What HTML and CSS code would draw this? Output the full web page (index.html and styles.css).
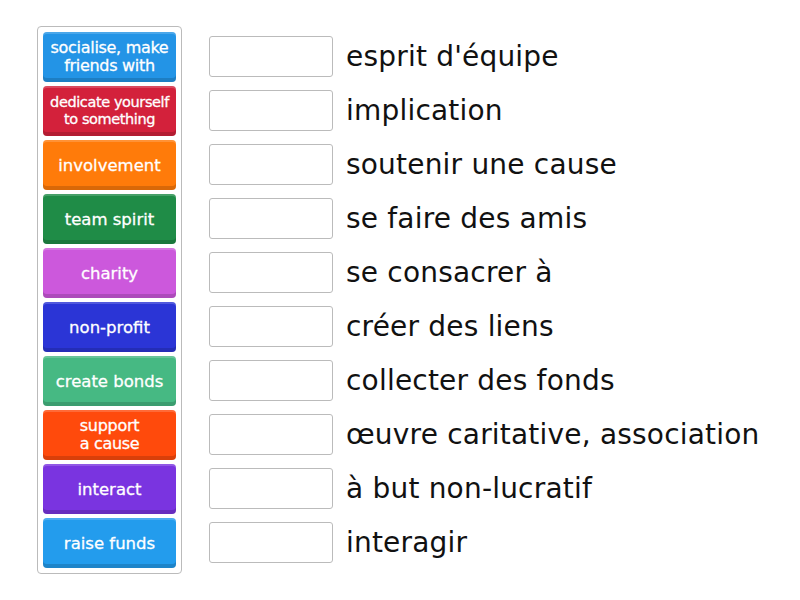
FILE: index.html
```html
<!DOCTYPE html>
<html lang="fr">

<head>
    <meta charset="UTF-8">
    <meta name="viewport" content="width=device-width, initial-scale=1.0">
    <title>Match up</title>
    <link rel="stylesheet" href="styles.css">
</head>

<body>
    <div class="board">
        <div class="tiles">
            <div class="tile blue small">socialise, make<br>friends with</div>
            <div class="tile red tiny">dedicate yourself<br>to something</div>
            <div class="tile orange">involvement</div>
            <div class="tile green">team spirit</div>
            <div class="tile pink">charity</div>
            <div class="tile navy">non-profit</div>
            <div class="tile mint">create bonds</div>
            <div class="tile vermilion small">support<br>a cause</div>
            <div class="tile purple">interact</div>
            <div class="tile sky">raise funds</div>
        </div>

        <div class="answers">
            <div class="row"><div class="slot"></div><span class="label">esprit d'équipe</span></div>
            <div class="row"><div class="slot"></div><span class="label">implication</span></div>
            <div class="row"><div class="slot"></div><span class="label">soutenir une cause</span></div>
            <div class="row"><div class="slot"></div><span class="label">se faire des amis</span></div>
            <div class="row"><div class="slot"></div><span class="label">se consacrer à</span></div>
            <div class="row"><div class="slot"></div><span class="label">créer des liens</span></div>
            <div class="row"><div class="slot"></div><span class="label">collecter des fonds</span></div>
            <div class="row"><div class="slot"></div><span class="label">œuvre caritative, association</span></div>
            <div class="row"><div class="slot"></div><span class="label">à but non-lucratif</span></div>
            <div class="row"><div class="slot"></div><span class="label">interagir</span></div>
        </div>
    </div>
</body>

</html>
```

FILE: styles.css
```css
body {
    margin: 0;
    padding: 26px 0 0 37px;
    background-color: #fff;
    font-family: "DejaVu Sans", "Open Sans", sans-serif;
}

.board {
    display: flex;
    align-items: flex-start;
    gap: 27px;
}

.tiles {
    width: 133px;
    padding: 5px;
    border: 1px solid #bbb;
    border-radius: 4px;
    display: flex;
    flex-direction: column;
    gap: 4px;
}

.tile {
    height: 50px;
    border-radius: 4px;
    display: flex;
    align-items: center;
    justify-content: center;
    text-align: center;
    color: #fff;
    font-size: 16.5px;
    line-height: 19px;
    white-space: nowrap;
    -webkit-text-stroke: 0.3px #fff;
    box-sizing: border-box;
    box-shadow: inset 0 -4px 0 rgba(0, 0, 0, 0.15), inset 0 2px 0 rgba(255, 255, 255, 0.18);
}

.tile.small {
    font-size: 16px;
    letter-spacing: -0.3px;
    line-height: 18px;
}

.tile.tiny {
    font-size: 14.5px;
    letter-spacing: -0.4px;
    line-height: 17px;
}

.blue { background-color: #2394e6; }
.red { background-color: #d3213b; }
.orange { background-color: #ff7b0a; }
.green { background-color: #1f8c47; }
.pink { background-color: #cc58dc; }
.navy { background-color: #2b35d6; }
.mint { background-color: #46b983; }
.vermilion { background-color: #ff4a0c; }
.purple { background-color: #7a34e0; }
.sky { background-color: #239ced; }

.answers {
    padding-top: 10px;
    display: flex;
    flex-direction: column;
    gap: 13px;
}

.row {
    display: flex;
    align-items: center;
    gap: 13px;
    height: 41px;
}

.slot {
    width: 122px;
    height: 39px;
    border: 1px solid #bbb;
    border-radius: 3px;
}

.label {
    font-size: 28px;
    letter-spacing: 0.2px;
    color: #111;
}
```
